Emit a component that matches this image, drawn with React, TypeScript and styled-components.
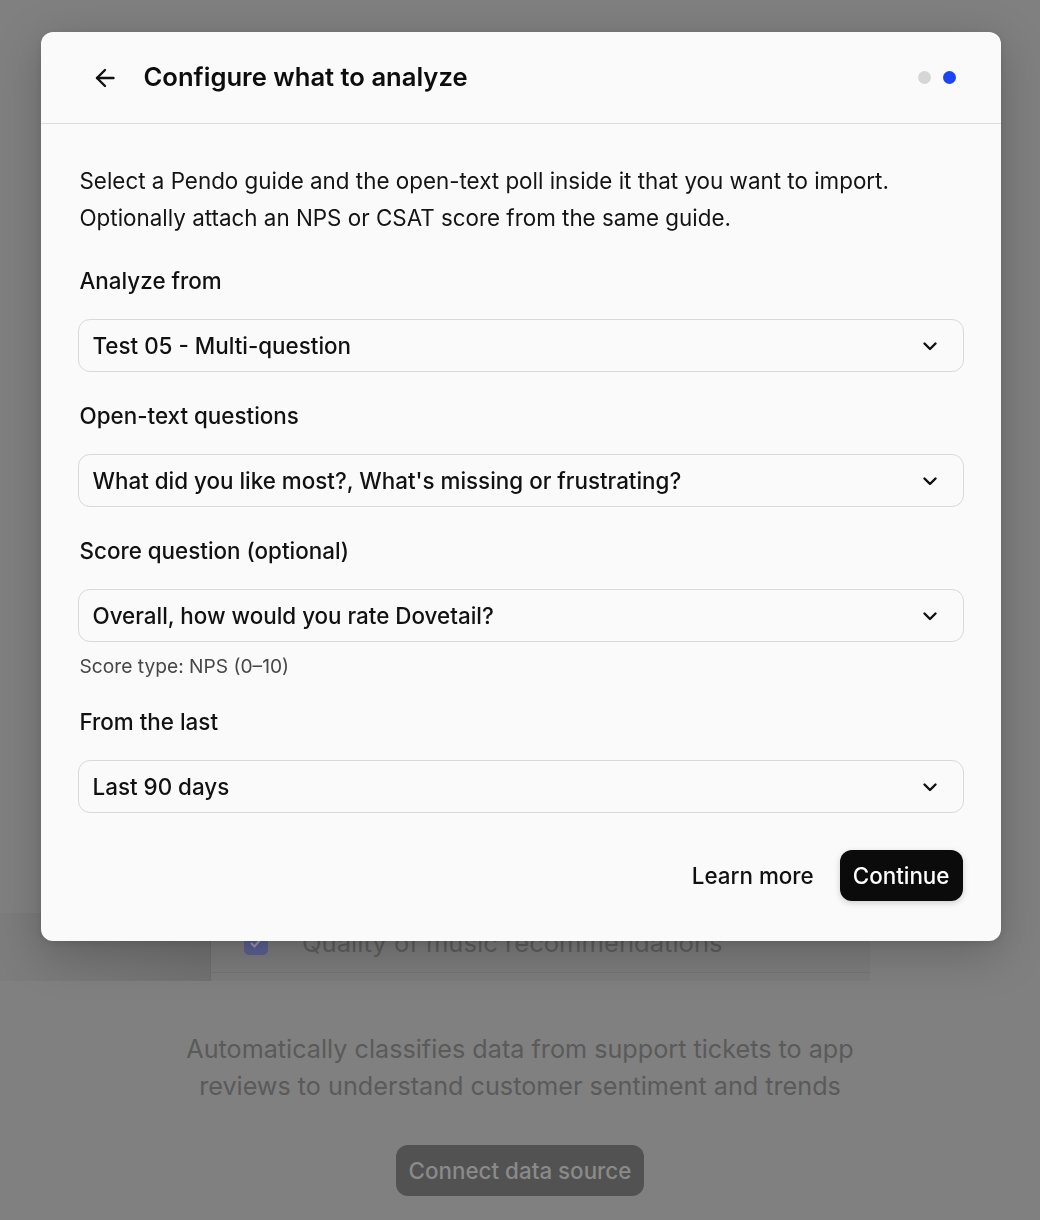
import React from "react";
import styled, { createGlobalStyle } from "styled-components";

const GlobalStyle = createGlobalStyle`
  * { box-sizing: border-box; }
  html, body { margin: 0; padding: 0; }
  body {
    background: #808080;
    font-family: Inter, "Noto Sans", "Liberation Sans", sans-serif;
    -webkit-font-smoothing: antialiased;
  }
`;

/* ---------- dimmed page behind the dialog ---------- */

const Page = styled.div`
  min-height: 1220px;
  padding-top: 913px;
  display: flex;
  flex-direction: column;
  align-items: center;
  background: #808080;
`;

const Preview = styled.div`
  align-self: flex-start;
  display: grid;
  grid-template-columns: 210px 660px;
`;

const PreviewSide = styled.div`
  background: linear-gradient(90deg, #7d7d7d 0%, #727272 100%);
`;

const PreviewList = styled.div`
  border-left: 1px solid #6e6e6e;
  padding-bottom: 8px;
  background: #7c7c7c;
`;

const PreviewRow = styled.div`
  height: 60px;
  display: flex;
  align-items: center;
  gap: 34px;
  padding-left: 33px;
  border-bottom: 1px solid #737373;
`;

const CheckBox = styled.span`
  width: 24px;
  height: 24px;
  border-radius: 5px;
  background: #5b6094;
  display: flex;
  align-items: center;
  justify-content: center;
`;

const PreviewText = styled.span`
  font-size: 25.6px;
  color: #5e5e5e;
`;

const Description = styled.p`
  margin: 50px 0 0;
  text-align: center;
  font-size: 25.2px;
  line-height: 37px;
  color: #5a5a5a;
`;

const GhostCta = styled.div`
  margin-top: 40px;
  height: 51px;
  width: 248px;
  border-radius: 12px;
  background: #525252;
  color: #8a8a8a;
  font-size: 22.4px;
  font-weight: 500;
  display: flex;
  align-items: center;
  justify-content: center;
`;

/* ---------- dialog ---------- */

const Overlay = styled.div`
  position: fixed;
  inset: 0;
  display: flex;
  justify-content: center;
  align-items: flex-start;
  padding-top: 32px;
  padding-left: 1px;
`;

const Dialog = styled.div`
  width: 960px;
  background: #fafafa;
  border-radius: 12px;
  box-shadow: 0 12px 48px rgba(0, 0, 0, 0.22), 0 2px 8px rgba(0, 0, 0, 0.1);
  color: #0d0d0d;
`;

const Header = styled.div`
  height: 92px;
  display: flex;
  align-items: center;
  padding: 0 45px 0 54px;
  border-bottom: 1.5px solid #dcdcdc;
`;

const BackButton = styled.button`
  all: unset;
  width: 20px;
  height: 20px;
  display: flex;
  color: #111;
  cursor: pointer;
`;

const Title = styled.h1`
  margin: 0 0 2px 29px;
  font-size: 25.6px;
  font-weight: 600;
  flex: 1;
`;

const Steps = styled.div`
  display: flex;
  gap: 12px;
`;

const Dot = styled.span<{ $active?: boolean }>`
  width: 13px;
  height: 13px;
  border-radius: 50%;
  background: ${(p) => (p.$active ? "#1a44f5" : "#d6d6d6")};
`;

const Body = styled.div`
  padding: 38px 37px 40px;
  display: flex;
  flex-direction: column;
  gap: 30px;
`;

const Intro = styled.p`
  margin: 0 0 1px 2px;
  font-size: 22.4px;
  line-height: 37px;
  color: #141414;
`;

const Field = styled.div`
  display: flex;
  flex-direction: column;
  gap: 24px;
`;

const Label = styled.label`
  margin-left: 2px;
  font-size: 22.4px;
  line-height: 28px;
  font-weight: 500;
  color: #111;
`;

const Control = styled.div`
  display: flex;
  flex-direction: column;
  gap: 12px;
`;

const Select = styled.div`
  height: 53px;
  border: 1.5px solid #d9d9d9;
  border-radius: 12px;
  background: #fafafa;
  display: flex;
  align-items: center;
  padding: 0 25px 0 14px;
  font-size: 22.4px;
  font-weight: 500;
  color: #111;
`;

const SelectValue = styled.span`
  flex: 1;
`;

const Hint = styled.span`
  margin-left: 2px;
  font-size: 19.2px;
  line-height: 24px;
  color: #474747;
`;

const Footer = styled.div`
  margin-top: 7px;
  display: flex;
  justify-content: flex-end;
  gap: 13px;
  padding-right: 1px;
`;

const Button = styled.button<{ $primary?: boolean }>`
  height: 51px;
  padding: 0 13px;
  border: none;
  border-radius: 12px;
  font-family: inherit;
  font-size: 22.4px;
  font-weight: 500;
  cursor: pointer;
  background: ${(p) => (p.$primary ? "#0b0b0b" : "transparent")};
  color: ${(p) => (p.$primary ? "#ffffff" : "#111")};
  box-shadow: ${(p) => (p.$primary ? "0 2px 6px rgba(0,0,0,0.18)" : "none")};
`;

const Chevron = () => (
  <svg width="16" height="16" viewBox="0 0 16 16" fill="none">
    <path d="M2.5 5.5L8 11L13.5 5.5" stroke="#111" strokeWidth="2.4" strokeLinecap="round" strokeLinejoin="round" />
  </svg>
);

const ArrowLeft = () => (
  <svg width="20" height="20" viewBox="0 0 20 20" fill="none">
    <path d="M18.5 10H2" stroke="currentColor" strokeWidth="2.4" strokeLinecap="round" />
    <path d="M10 2L2 10L10 18" stroke="currentColor" strokeWidth="2.4" strokeLinecap="round" strokeLinejoin="round" />
  </svg>
);

const fields = [
  { label: "Analyze from", value: "Test 05 - Multi-question" },
  { label: "Open-text questions", value: "What did you like most?, What's missing or frustrating?" },
  { label: "Score question (optional)", value: "Overall, how would you rate Dovetail?", hint: "Score type: NPS (0–10)" },
  { label: "From the last", value: "Last 90 days" },
];

export default function App() {
  return (
    <>
      <GlobalStyle />
      <Page>
        <Preview>
          <PreviewSide />
          <PreviewList>
            <PreviewRow>
              <CheckBox>
                <svg width="14" height="14" viewBox="0 0 14 14" fill="none">
                  <path d="M2.5 7.5L5.5 10.5L11.5 3.5" stroke="#9a9cb6" strokeWidth="2" strokeLinecap="round" strokeLinejoin="round" />
                </svg>
              </CheckBox>
              <PreviewText>Quality of music recommendations</PreviewText>
            </PreviewRow>
          </PreviewList>
        </Preview>
        <Description>
          Automatically classifies data from support tickets to app
          <br />
          reviews to understand customer sentiment and trends
        </Description>
        <GhostCta>Connect data source</GhostCta>
      </Page>

      <Overlay>
        <Dialog role="dialog">
          <Header>
            <BackButton aria-label="Back">
              <ArrowLeft />
            </BackButton>
            <Title>Configure what to analyze</Title>
            <Steps>
              <Dot />
              <Dot $active />
            </Steps>
          </Header>
          <Body>
            <Intro>
              Select a Pendo guide and the open-text poll inside it that you want to import.
              <br />
              Optionally attach an NPS or CSAT score from the same guide.
            </Intro>
            {fields.map((f) => (
              <Field key={f.label}>
                <Label>{f.label}</Label>
                <Control>
                  <Select>
                    <SelectValue>{f.value}</SelectValue>
                    <Chevron />
                  </Select>
                  {f.hint && <Hint>{f.hint}</Hint>}
                </Control>
              </Field>
            ))}
            <Footer>
              <Button>Learn more</Button>
              <Button $primary>Continue</Button>
            </Footer>
          </Body>
        </Dialog>
      </Overlay>
    </>
  );
}
